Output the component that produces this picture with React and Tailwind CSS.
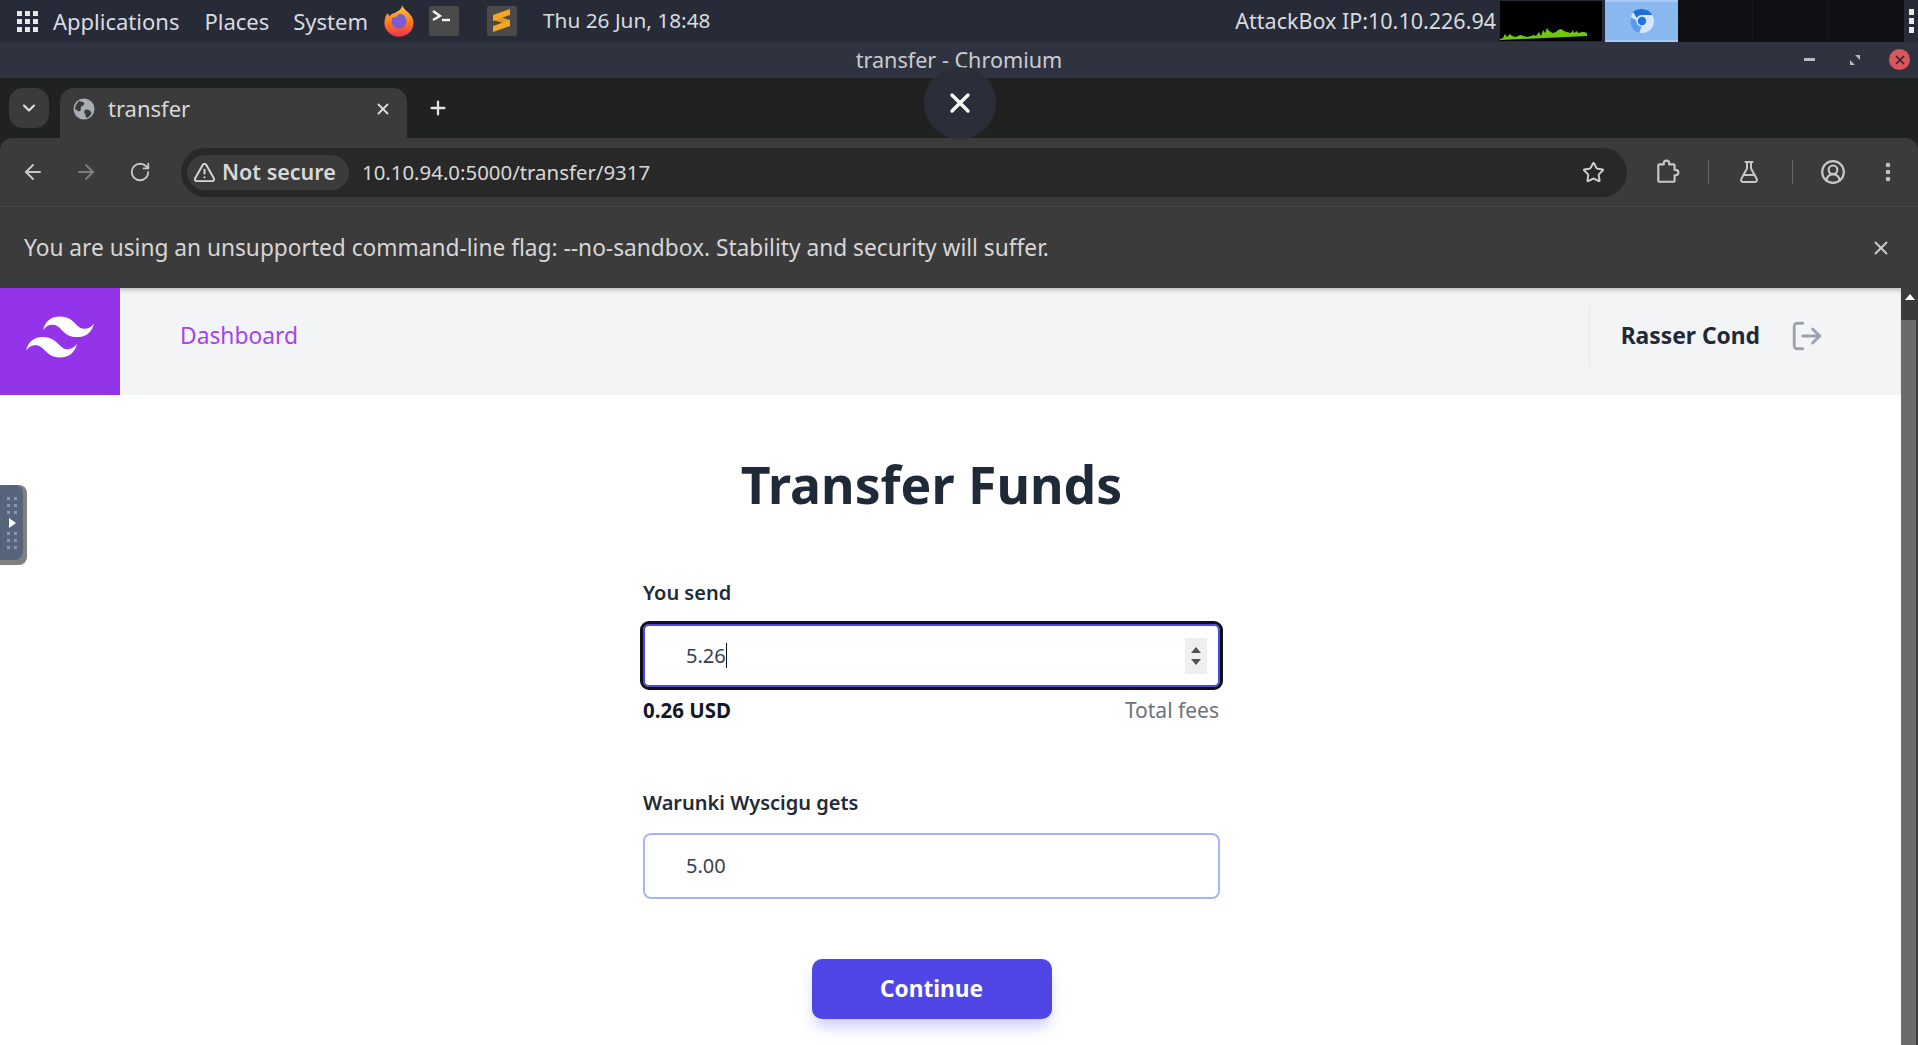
import { ArrowLeft, ArrowRight, RotateCw, TriangleAlert, Star, FlaskConical, CircleUserRound, EllipsisVertical, X, Plus, ChevronDown, LogOut } from 'lucide-react';

const uiFont = { fontFamily: '"Noto Sans", "Open Sans", sans-serif' };

function GridIcon() {
  const dots = Array.from({ length: 9 });
  return (
    <div className="grid grid-cols-3 gap-[3px] w-[21px]">
      {dots.map((_, i) => (
        <div key={i} className="w-[5px] h-[5px] bg-[#e8e8e8]"></div>
      ))}
    </div>
  );
}

function FirefoxIcon() {
  return (
    <svg width="32" height="32" viewBox="0 0 32 32">
      <defs>
        <linearGradient id="ff" x1="0" y1="0" x2="0" y2="1">
          <stop offset="0" stopColor="#ffc62e" />
          <stop offset="0.55" stopColor="#ff7a26" />
          <stop offset="1" stopColor="#e8304f" />
        </linearGradient>
      </defs>
      <path d="M19 0c1 4 7 7 10 12 3 6 1 13-3 16-4 4-12 5-17 2C3 27 0 20 2 14c0-2 1-4 3-6 0 2 1 3 2 3 1-2 3-3 5-3C14 6 19 5 19 0z" fill="url(#ff)" />
      <circle cx="16" cy="16" r="7.5" fill="#7a5bd0" />
      <path d="M8 11c3-3 8-4 12-2-4 0-6 1-7 3-3 1-4 0-5-1z" fill="#ff9a2e" />
    </svg>
  );
}

function TerminalIcon() {
  return (
    <div className="w-[30px] h-[30px] bg-[#4a4a4a] rounded-[2px] flex">
      <svg width="30" height="30" viewBox="0 0 30 30" fill="none" stroke="#f2f2f2" strokeWidth="2.4">
        <path d="M4 5l7 5-7 4" />
        <path d="M13 14h8" />
      </svg>
    </div>
  );
}

function SublimeIcon() {
  return (
    <div className="w-[30px] h-[30px] bg-[#4a4a4a] rounded-[2px] flex">
      <svg width="30" height="30" viewBox="0 0 30 30" fill="#f6a623">
        <path d="M23 3L6 9v6l17-6z" />
        <path d="M6 14l17 5v-5L6 9z" opacity="0.85" />
        <path d="M23 14L6 20v6l17-6z" />
      </svg>
    </div>
  );
}

function CpuGraph() {
  return (
    <div className="w-[102px] h-[40px] bg-black flex shrink-0">
      <svg width="102" height="40" viewBox="0 0 102 40" fill="#6fc80e">
        <path d="M0 39v-1l3-1 2-4 2 3 3-3 2 2 4 1 4-2 4 1 3 1 4-1 3-1 2 1 3-4 2 4 2-6 2 3 2-5 2 3 2 1 2 1 3-1 2-2 3-1 3 2 3 1 4 1 2-3 1 3 3-2 1 2 4-1 2 0 3 1v3z" />
      </svg>
    </div>
  );
}

function ChromiumIcon() {
  return (
    <div className="w-[73px] h-[42px] bg-[#89b7f0] border-y-2 border-[#a8cbf5] flex items-center justify-center shrink-0">
      <svg width="26" height="26" viewBox="0 0 26 26">
        <circle cx="13" cy="13" r="12" fill="#d7e6fa" />
        <path d="M13 1a12 12 0 0 1 10.4 6H13a6 6 0 0 0-5.2 3L4 3.8A12 12 0 0 1 13 1z" fill="#1a6fd8" />
        <path d="M2 9l6 4a6 6 0 0 0 5 5l-3 7A12 12 0 0 1 2 9z" fill="#5a9bef" />
        <circle cx="13" cy="13" r="5" fill="#1a73e8" stroke="#d7e6fa" strokeWidth="1.5" />
      </svg>
    </div>
  );
}

function TopPanel() {
  return (
    <div className="h-[42px] bg-[#272b37] flex items-center text-[22px] text-[#d9dbe0]" style={uiFont}>
      <div className="ml-[17px]"><GridIcon /></div>
      <span className="ml-[15px]">Applications</span>
      <span className="ml-[25px]">Places</span>
      <span className="ml-[24px]">System</span>
      <div className="ml-[15px]"><FirefoxIcon /></div>
      <div className="ml-[14px]"><TerminalIcon /></div>
      <div className="ml-[28px]"><SublimeIcon /></div>
      <span className="ml-[26px] text-[20.8px]">Thu 26 Jun, 18:48</span>
      <span className="ml-auto mr-[4px] text-[21.5px]">AttackBox IP:10.10.226.94</span>
      <CpuGraph />
      <div className="ml-[3px]"><ChromiumIcon /></div>
      <div className="w-[226px] h-[42px] bg-[#0e1014] flex shrink-0">
        <div className="w-[75px] border-r border-[#16181d]"></div>
        <div className="w-[75px] border-r border-[#16181d]"></div>
      </div>
      <div className="w-[14px] shrink-0 flex flex-col items-center gap-[3px]">
        <div className="w-[5px] h-[6px] bg-[#e8e8e8]"></div>
        <div className="w-[5px] h-[6px] bg-[#e8e8e8]"></div>
        <div className="w-[5px] h-[6px] bg-[#e8e8e8]"></div>
      </div>
    </div>
  );
}

function TitleBar() {
  return (
    <div className="h-[36px] bg-[#2f3340] flex items-center text-[21.6px] text-[#c9cbd1] relative" style={uiFont}>
      <div className="w-[1922px] text-center">transfer - Chromium</div>
      <div className="absolute right-[8px] top-[7px] flex items-center">
        <div className="w-[11px] h-[3px] bg-[#b9bbc0] mr-[35px]"></div>
        <svg className="mr-[29px]" width="10" height="10" viewBox="0 0 10 10" fill="#b9bbc0"><path d="M5 0h5v5zM0 5l5 5H0z" /></svg>
        <div className="w-[21px] h-[21px] rounded-full bg-[#d9565c] flex items-center justify-center">
          <X size={14} strokeWidth={3} color="#33262c" />
        </div>
      </div>
    </div>
  );
}

function TabGlobe() {
  return (
    <svg className="ml-[13px]" width="22" height="22" viewBox="0 0 22 22">
      <circle cx="11" cy="11" r="10.5" fill="#a9adb3" />
      <path d="M6 3c2 1 4 0 5 2s-2 3-3 4 1 3-1 4-3-1-5-2c0-3 2-6 4-8zM12 12c2-1 5 0 6 2s-2 5-4 6c-2-1-1-3-2-4s-1-3 0-4z" fill="#3b3b3b" />
    </svg>
  );
}

function TabStrip() {
  return (
    <div className="h-[60px] bg-[#202222] flex items-end relative" style={uiFont}>
      <div className="w-[40px] h-[40px] ml-[9px] mb-[10px] rounded-[14px] bg-[#3b3b3b] flex items-center justify-center text-[#e3e3e3]">
        <ChevronDown size={20} strokeWidth={2.5} />
      </div>
      <div className="w-[347px] h-[50px] ml-[11px] rounded-t-[14px] bg-[#3b3b3b] flex items-center pb-[9px] text-[#d8d8d8]">
        <TabGlobe />
        <span className="ml-[13px] text-[22px]">transfer</span>
        <X className="ml-auto mr-[15px]" size={18} strokeWidth={2.5} />
      </div>
      <Plus className="ml-[20px] mb-[19px] text-[#e3e3e3]" size={22} strokeWidth={2.5} />
    </div>
  );
}

function ExtensionIcon() {
  return (
    <svg className="ml-[27px]" width="26" height="26" viewBox="0 0 24 24" fill="none" stroke="#c7c7c7" strokeWidth="2" strokeLinejoin="round">
      <path d="M9 5V4a2.5 2.5 0 0 1 5 0v1h4a1 1 0 0 1 1 1v4h1a2.5 2.5 0 0 1 0 5h-1v5a1 1 0 0 1-1 1H5a1 1 0 0 1-1-1V6a1 1 0 0 1 1-1z" />
    </svg>
  );
}

function Toolbar() {
  return (
    <div className="bg-[#202222]">
      <div className="h-[69px] bg-[#3b3b3b] rounded-t-[12px] border-b border-[#474747] flex items-center" style={uiFont}>
        <ArrowLeft className="ml-[21px] text-[#c7c7c7]" size={24} strokeWidth={2} />
        <ArrowRight className="ml-[29px] text-[#7d7d7d]" size={24} strokeWidth={2} />
        <RotateCw className="ml-[31px] text-[#c7c7c7]" size={22} strokeWidth={2} />
        <div className="w-[1446px] h-[49px] ml-[30px] rounded-full bg-[#282828] flex items-center">
          <div className="w-[162px] h-[35px] ml-[6px] rounded-full bg-[#3b3b3b] flex items-center text-[#d8d8d8]">
            <TriangleAlert className="ml-[6px]" size={23} strokeWidth={2} />
            <span className="ml-[6px] text-[21.5px] font-semibold">Not secure</span>
          </div>
          <span className="ml-[13px] text-[20.4px] text-[#d8d8d8]">10.10.94.0:5000/transfer/9317</span>
          <Star className="ml-auto mr-[22px] text-[#d0d0d0]" size={23} strokeWidth={2} />
        </div>
        <ExtensionIcon />
        <div className="w-px h-[24px] ml-[28px] bg-[#666666]"></div>
        <FlaskConical className="ml-[28px] text-[#c7c7c7]" size={24} strokeWidth={2} />
        <div className="w-px h-[24px] ml-[31px] bg-[#666666]"></div>
        <CircleUserRound className="ml-[27px] text-[#c7c7c7]" size={26} strokeWidth={2} />
        <EllipsisVertical className="ml-[30px] text-[#c7c7c7]" size={24} strokeWidth={2.5} />
      </div>
    </div>
  );
}

function InfoBar() {
  return (
    <div className="h-[81px] pt-[1px] bg-[#3b3b3b] flex items-center text-[22.7px] text-[#d6d6d6]" style={uiFont}>
      <span className="ml-[24px]">You are using an unsupported command-line flag: --no-sandbox. Stability and security will suffer.</span>
      <X className="ml-auto mr-[26px] text-[#cfcfcf]" size={22} strokeWidth={2} />
    </div>
  );
}

function TailwindLogo() {
  return (
    <svg width="68" height="68" viewBox="0 0 24 24" fill="#ffffff">
      <path d="M12.001,4.8c-3.2,0-5.2,1.6-6,4.8c1.2-1.6,2.6-2.2,4.2-1.8c0.913,0.228,1.565,0.89,2.288,1.624 C13.666,10.618,15.027,12,18.001,12c3.2,0,5.2-1.6,6-4.8c-1.2,1.6-2.6,2.2-4.2,1.8c-0.913-0.228-1.565-0.89-2.288-1.624 C16.337,6.182,14.976,4.8,12.001,4.8z M6.001,12c-3.2,0-5.2,1.6-6,4.8c1.2-1.6,2.6-2.2,4.2-1.8c0.913,0.228,1.565,0.89,2.288,1.624 c1.177,1.194,2.538,2.576,5.512,2.576c3.2,0,5.2-1.6,6-4.8c-1.2,1.6-2.6,2.2-4.2,1.8c-0.913-0.228-1.565-0.89-2.288-1.624 C10.337,13.382,8.976,12,6.001,12z" />
    </svg>
  );
}

function Spinner() {
  return (
    <div className="w-[22px] h-[36px] bg-[#efefef] flex flex-col items-center justify-center gap-[6px]">
      <div className="w-0 h-0 border-x-[5px] border-x-transparent border-b-[6px] border-b-[#505050]"></div>
      <div className="w-0 h-0 border-x-[5px] border-x-transparent border-t-[6px] border-t-[#505050]"></div>
    </div>
  );
}

function AppHeader() {
  return (
    <div className="h-[107px] bg-[#f3f4f6] flex items-center shadow-[inset_0_4px_4px_-2px_rgba(0,0,0,0.25)]">
      <div className="w-[120px] h-[107px] bg-[#9333ea] flex items-center justify-center pb-[9px]">
        <TailwindLogo />
      </div>
      <a className="ml-[60px] mb-[11px] text-[22.8px] text-[#a544ee]">Dashboard</a>
      <div className="ml-auto mb-[11px] h-[60px] border-l border-[#e5e7eb] pl-[31px] flex items-center">
        <span className="text-[22.8px] font-bold text-[#1f2937]">Rasser Cond</span>
        <LogOut className="ml-[30px] mr-[77px] text-[#9ca3af]" size={34} strokeWidth={2} />
      </div>
    </div>
  );
}

function TransferForm() {
  return (
    <div className="flex-1 flex justify-center pr-[38px] bg-white">
      <div className="w-[577px] flex flex-col">
        <h1 className="mt-[55px] text-center text-[51.7px] leading-[68px] font-bold text-[#1f2937] whitespace-nowrap">Transfer Funds</h1>
        <label className="mt-[61px] text-[20px] leading-[28px] font-semibold text-[#1f2937]">You send</label>
        <div className="mt-[17px] h-[63px] rounded-[6px] border-[2px] border-[#4f46e5] outline-[3px] outline-[#0f0f1a] flex items-center pl-[41px] pr-[11px] text-[20px] text-[#374151]">
          <span>5.26</span>
          <div className="w-px h-[25px] bg-[#111111]"></div>
          <div className="ml-auto"><Spinner /></div>
        </div>
        <div className="mt-[9px] flex justify-between text-[20.5px] leading-[28px]">
          <span className="font-bold text-[#111827]">0.26 USD</span>
          <span className="mr-[1px] text-[#6b7280] text-[21px]">Total fees</span>
        </div>
        <label className="mt-[65px] text-[20px] leading-[28px] font-semibold text-[#1f2937]">Warunki Wyscigu gets</label>
        <div className="mt-[16px] h-[66px] rounded-[8px] border-[2px] border-[#a5b4fc] flex items-center pl-[41px] text-[20px] text-[#374151]">5.00</div>
        <div className="mt-[60px] flex justify-center">
          <button className="w-[240px] h-[60px] rounded-[10px] bg-[#4f46e5] text-white text-[22.7px] font-bold shadow-[0_10px_15px_-3px_rgba(99,102,241,0.35)]">Continue</button>
        </div>
      </div>
    </div>
  );
}

function Scrollbar() {
  return (
    <div className="w-[17px] bg-[#3b3b3b] flex flex-col items-center">
      <div className="mt-[6px] w-0 h-0 border-x-[5px] border-x-transparent border-b-[6px] border-b-white"></div>
      <div className="mt-[20px] w-[15px] flex-1 bg-[#6b6b6b] self-start"></div>
    </div>
  );
}

export default function App() {
  return (
    <div className="w-[1918px] h-[1045px] overflow-hidden relative flex flex-col bg-white" style={uiFont}>
      <TopPanel />
      <TitleBar />
      <TabStrip />
      <Toolbar />
      <InfoBar />
      <div className="flex-1 flex min-h-0">
        <div className="flex-1 flex flex-col min-w-0">
          <AppHeader />
          <TransferForm />
        </div>
        <Scrollbar />
      </div>

      {/* fullscreen close button from the remote session */}
      <div className="absolute left-[924px] top-[67px] w-[72px] h-[72px] rounded-full bg-[#2b2e38] flex items-center justify-center">
        <X className="text-white" size={32} strokeWidth={2.5} />
      </div>

      {/* side handle */}
      <div className="absolute left-0 top-[485px] w-[27px] h-[80px] bg-[#808080] rounded-r-[8px]">
        <div className="w-[23px] h-[75px] bg-[#56657b] rounded-r-[8px] flex flex-col items-center justify-center gap-[4px]">
          <div className="grid grid-cols-2 gap-[4px]">
            {Array.from({ length: 6 }).map((_, i) => <div key={i} className="w-[3px] h-[3px] bg-[#8b97a8]"></div>)}
          </div>
          <div className="w-0 h-0 border-y-[5px] border-y-transparent border-l-[7px] border-l-white ml-[2px]"></div>
          <div className="grid grid-cols-2 gap-[4px]">
            {Array.from({ length: 6 }).map((_, i) => <div key={i} className="w-[3px] h-[3px] bg-[#8b97a8]"></div>)}
          </div>
        </div>
      </div>
    </div>
  );
}
